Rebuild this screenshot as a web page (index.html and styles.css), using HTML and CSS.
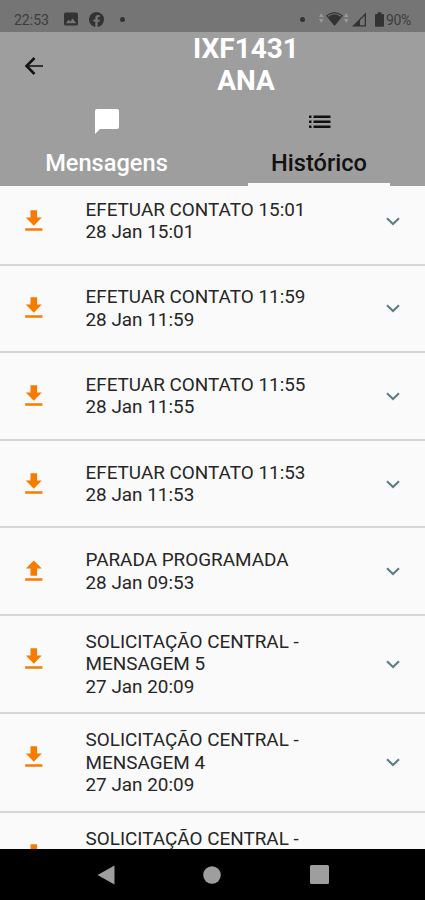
FILE: index.html
```html
<!DOCTYPE html>
<html lang="pt-BR">
<head>
<meta charset="utf-8">
<title>Histórico</title>
<link rel="stylesheet" href="styles.css">
</head>
<body>
<svg class="defs" width="0" height="0">
  <symbol id="down" viewBox="0 0 18 22"><path d="M5.500 .3h6.600v7.200H16.800L8.800 15.700.8 7.500h4.700zM.2 18.300h17.200v2.500H.2z"/></symbol>
  <symbol id="up" viewBox="0 0 18 22"><path d="M5.500 15.700h6.600V8.500H16.800L8.800.5.800 8.500h4.700zM.2 18.300h17.200v2.500H.2z"/></symbol>
  <symbol id="chev" viewBox="0 0 14 9"><path d="M1 1.200l6 5.800 6-5.800"/></symbol>
</svg>
<div class="phone">
  <div class="status">
    <span class="time">22:53</span>
    <svg class="pic" width="14" height="14" viewBox="0 0 15 14"><path fill-rule="evenodd" d="M2 0h11a2 2 0 0 1 2 2v10a2 2 0 0 1-2 2H2a2 2 0 0 1-2-2V2a2 2 0 0 1 2-2zM2 11.500h11L9.300 6.500 6.800 9.800 5 7.800z"/></svg>
    <svg class="fb" width="15" height="15" viewBox="0 0 24 24"><path d="M24 12A12 12 0 1 0 10.100 23.900v-8.400H7.100V12h3V9.400c0-3 1.800-4.700 4.500-4.700 1.300 0 2.700.3 2.700.3v3h-1.500c-1.500 0-2 .9-2 1.900V12h3.400l-.6 3.500h-2.800v8.400A12 12 0 0 0 24 12z"/></svg>
    <i class="dot"></i>
    <span class="grow"></span>
    <i class="dot right"></i>
    <svg class="wifi" width="30" height="16" viewBox="0 0 30 16"><path d="M7 4.500Q15.500-2.500 24 4.500L15.500 15z"/><path class="ring" d="M9 5.300Q15.500.2 22 5.300"/><path class="pale" d="M0 6l2.300-4 2.300 4zM0 8h4.600l-2.300 4zM25 6l2.200-4 2.300 4zM25 8h4.500l-2.300 4z"/></svg>
    <svg class="signal" width="15" height="15" viewBox="0 0 15 15"><path d="M0 14.500L14 .5v14zM8 8.200v5h4.700V3.700z" fill-rule="evenodd"/></svg>
    <svg class="battery" width="9" height="15" viewBox="0 0 10 16"><path d="M3 0h4v2h2q1 0 1 1v12q0 1-1 1H1q-1 0-1-1V3q0-1 1-1h2z"/></svg>
    <span class="pct">90%</span>
  </div>
  <header>
    <div class="bar">
      <svg class="back" width="20" height="20" viewBox="0 0 20 20"><path class="shaft" d="M19 10H3"/><path d="M10.500 2L2.500 10l8 8"/></svg>
      <h1>IXF1431<br>ANA</h1>
    </div>
    <nav>
      <div class="tab first"><svg width="26" height="26" viewBox="0 0 26 26"><path d="M3 1h20q2 0 2 2v16q0 2-2 2H6l-5 5V3q0-2 2-2z"/></svg><span>Mensagens</span></div>
      <div class="tab active"><svg width="26" height="26" viewBox="0 0 26 26"><path d="M3 7.500H5.500V10H3zM3 12.500H5.500V15H3zM3 17.500H5.500V20H3zM7.500 7.500h17V10h-17zM7.500 12.500h17V15h-17zM7.500 17.500h17V20h-17z"/></svg><span>Histórico</span></div>
    </nav>
  </header>
  <main>
    <ul>
      <li><svg class="dir"><use href="#down"/></svg><p>EFETUAR CONTATO 15:01<br>28 Jan 15:01</p><svg class="chev"><use href="#chev"/></svg></li>
      <li><svg class="dir"><use href="#down"/></svg><p>EFETUAR CONTATO 11:59<br>28 Jan 11:59</p><svg class="chev"><use href="#chev"/></svg></li>
      <li><svg class="dir"><use href="#down"/></svg><p>EFETUAR CONTATO 11:55<br>28 Jan 11:55</p><svg class="chev"><use href="#chev"/></svg></li>
      <li><svg class="dir"><use href="#down"/></svg><p>EFETUAR CONTATO 11:53<br>28 Jan 11:53</p><svg class="chev"><use href="#chev"/></svg></li>
      <li><svg class="dir"><use href="#up"/></svg><p>PARADA PROGRAMADA<br>28 Jan 09:53</p><svg class="chev"><use href="#chev"/></svg></li>
      <li class="tall"><svg class="dir"><use href="#down"/></svg><p>SOLICITAÇÃO CENTRAL -<br>MENSAGEM 5<br>27 Jan 20:09</p><svg class="chev"><use href="#chev"/></svg></li>
      <li class="tall"><svg class="dir"><use href="#down"/></svg><p>SOLICITAÇÃO CENTRAL -<br>MENSAGEM 4<br>27 Jan 20:09</p><svg class="chev"><use href="#chev"/></svg></li>
      <li class="tall last"><svg class="dir"><use href="#down"/></svg><p>SOLICITAÇÃO CENTRAL -</p></li>
    </ul>
  </main>
  <footer>
    <svg width="18" height="20" viewBox="0 0 18 20"><path d="M.5 10L17.500.5v19z"/></svg>
    <svg width="18" height="18" viewBox="0 0 18 18"><circle cx="9" cy="9" r="8.800"/></svg>
    <svg width="19" height="19" viewBox="0 0 19 19"><rect width="19" height="19" rx="1.500"/></svg>
  </footer>
</div>
</body>
</html>
```

FILE: styles.css
```css
* { box-sizing: border-box; }
body { margin: 0; font-family: Roboto, "Liberation Sans", sans-serif; }
svg { display: block; flex: none; }
.defs { position: absolute; }
.phone { width: 425px; height: 900px; display: flex; flex-direction: column; overflow: hidden; background: #fafafa; }

.status { height: 32px; flex: none; display: flex; align-items: center; padding: 6px 12px 0 14px; background: #757575; color: #3c3c3c; fill: #333; font-size: 14px; }
.time { width: 50px; padding-top: 1px; }
.fb { margin-left: 11px; }
.dot { width: 5px; height: 5px; border-radius: 50%; background: #333; margin-left: 16px; }
.dot.right { margin: 0 14px 0 0; }
.grow { flex: 1; }
.ring { fill: none; stroke: #777; stroke-width: 1.2; }
.pale { fill: #999; }
.signal { margin-left: 3px; }
.battery { margin-left: 8px; }
.pct { margin-left: 2px; width: 27px; padding-top: 1px; letter-spacing: -0.4px; }

header { height: 154px; flex: none; background: #9e9e9e; }
.bar { height: 67px; display: flex; align-items: center; }
.back { margin-left: 24px; fill: none; stroke: #111; stroke-width: 2.500; }
.back .shaft { stroke: #333; stroke-width: 2; }
h1 { margin: 0 0 0 23px; width: 358px; text-align: center; color: #fff; font-size: 28px; line-height: 32.500px; font-weight: 700; padding-bottom: 1px; }
nav { display: flex; height: 87px; }
.tab { width: 213px; display: flex; flex-direction: column; align-items: center; padding-top: 9px; font-size: 23.600px; line-height: 28px; font-weight: 500; color: #fff; fill: #fff; }
.tab span { margin-top: 15px; }
.tab.active { color: #111; fill: #111; width: 142px; margin-left: 35px; border-bottom: 3px solid #fafafa; }

main { flex: 1; min-height: 0; overflow: hidden; }
ul { list-style: none; margin: -8px 0 0; padding: 0; }
li { height: 87.600px; display: flex; align-items: center; border-bottom: 2px solid #d6d6d6; padding: 0 25px; }
li.tall { height: 98.300px; }
.dir { width: 18px; height: 22px; fill: #f57c00; align-self: flex-start; margin-top: 31.800px; }
p { margin: 1px 0 0 42.500px; flex: 1; font-size: 18.900px; line-height: 22.400px; color: #262626; white-space: nowrap; }
.chev { width: 14px; height: 9px; margin-top: 1px; fill: none; stroke: #5f7f89; stroke-width: 2.200; }
.last p { align-self: flex-start; margin-top: 15px; }

footer { height: 51px; flex: none; background: #000; display: flex; align-items: center; padding-left: 96.500px; gap: 88.800px; fill: #9e9e9e; }
```
